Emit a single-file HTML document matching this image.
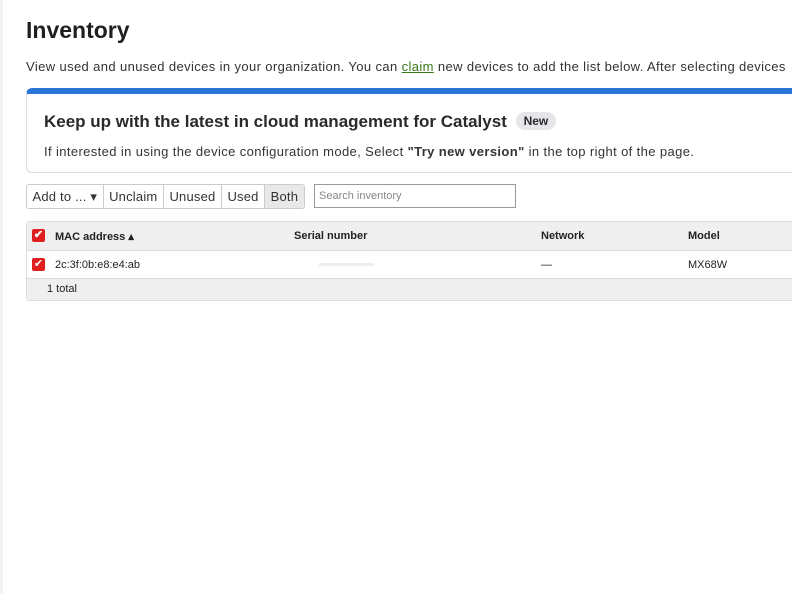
<!DOCTYPE html><html><head><style>
body{margin:0;width:792px;height:594px;overflow:hidden;background:#fff;font-family:"Liberation Sans",sans-serif;color:#222;position:relative}
.strip{position:absolute;left:0;top:0;width:3px;height:594px;background:#f3f3f3}
h1{position:absolute;left:26px;top:17px;margin:0;font-size:23px;font-weight:bold;color:#1f1f1f}
.sub{position:absolute;left:26px;top:59px;font-size:13px;white-space:nowrap;color:#333;letter-spacing:0.38px}
.sub a{color:#3a7a1a;text-decoration:underline}
.banner{position:absolute;left:26px;top:88px;width:800px;height:85px;border:1px solid #ddd;border-top:6px solid #2a76d6;border-radius:6px;box-sizing:border-box}
.banner .h{position:absolute;left:17px;top:18px;font-size:17px;font-weight:bold;color:#2a2a2a;white-space:nowrap}
.badge{display:inline-block;background:#e4e6ea;border-radius:10px;font-size:12px;padding:2px 8px;margin-left:4px;vertical-align:2px}
.banner .t{position:absolute;left:17px;top:50px;font-size:13px;white-space:nowrap;color:#333;letter-spacing:0.38px}
.btns{position:absolute;left:26px;top:184px;height:25px;display:flex;border:1px solid #ccc;border-radius:3px;box-sizing:border-box;font-size:13px;letter-spacing:0.2px}
.btns div{padding:0 5.5px;line-height:23px;border-right:1px solid #ccc;color:#333}
.btns div:last-child{border-right:0;background:#e8e8e8}
.search{position:absolute;left:314px;top:184px;width:202px;height:24px;border:1px solid #999;box-sizing:border-box;font-size:11px;color:#888;padding:5px 4px}
.tbl{position:absolute;left:26px;top:221px;width:800px;height:80px;border:1px solid #ddd;border-radius:3px;box-sizing:border-box;font-size:11px}
.hd{position:absolute;left:0;top:0;right:0;height:28px;background:#efefef;border-bottom:1px solid #ddd;font-weight:bold}
.rw{position:absolute;left:0;top:29px;right:0;height:27px;border-bottom:1px solid #ddd}
.ft{position:absolute;left:0;top:57px;right:0;bottom:0;background:#efefef}
.c{position:absolute;top:8px;white-space:nowrap}
.cb{position:absolute;left:5px;top:7px;width:13px;height:13px;background:#e02020;border-radius:2px;color:#fff;font-size:11px;line-height:13px;text-align:center}
</style></head><body>
<div class="strip"></div>
<h1>Inventory</h1>
<div class="sub">View used and unused devices in your organization. You can <a>claim</a> new devices to add the list below. After selecting devices</div>
<div class="banner"><div class="h">Keep up with the latest in cloud management for Catalyst <span class="badge">New</span></div>
<div class="t">If interested in using the device configuration mode, Select <b>"Try new version"</b> in the top right of the page.</div></div>
<div class="btns"><div>Add to ... ▾</div><div>Unclaim</div><div>Unused</div><div>Used</div><div>Both</div></div>
<div class="search">Search inventory</div>
<div class="tbl">
<div class="hd"><div class="cb">✔</div><div class="c" style="left:28px">MAC address ▴</div><div class="c" style="left:267px">Serial number</div><div class="c" style="left:514px">Network</div><div class="c" style="left:661px">Model</div></div>
<div class="rw"><div class="cb">✔</div><div class="c" style="left:28px">2c:3f:0b:e8:e4:ab</div><div style="position:absolute;left:292px;top:12px;width:55px;height:3px;background:#eee"></div><div class="c" style="left:514px">—</div><div class="c" style="left:661px">MX68W</div></div>
<div class="ft"><div class="c" style="left:20px;top:4px">1 total</div></div>
</div>
</body></html>
